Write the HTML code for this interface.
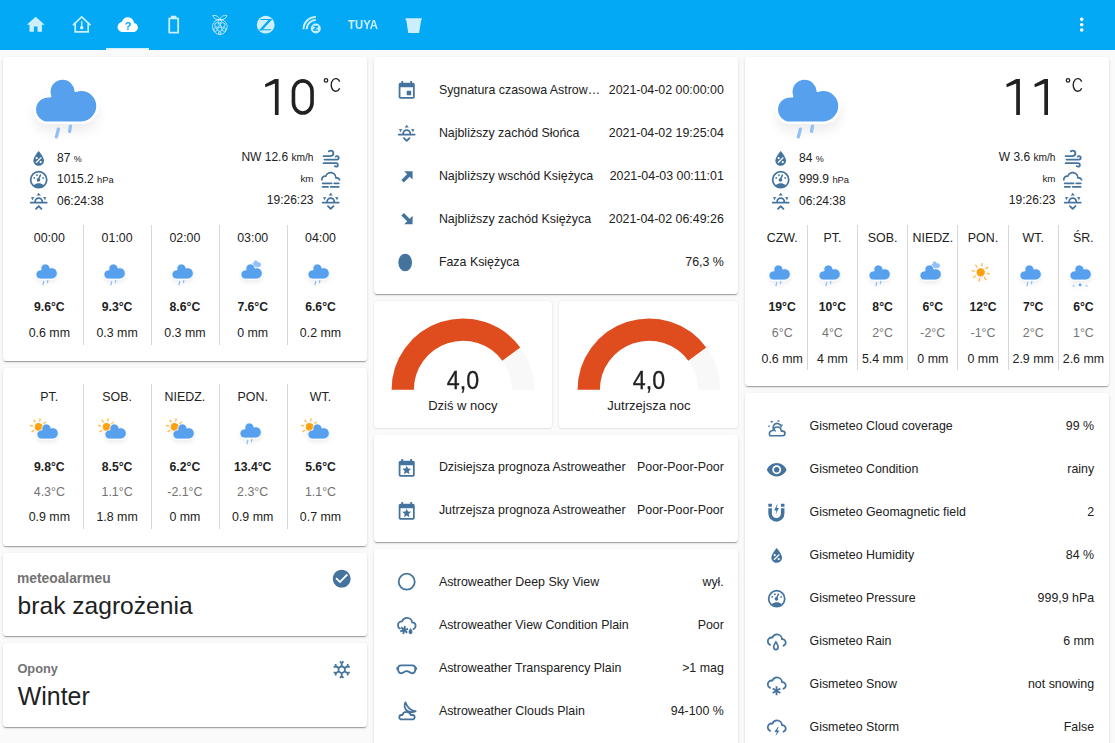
<!DOCTYPE html>
<html><head><meta charset="utf-8">
<style>
*{box-sizing:border-box;margin:0;padding:0}
html,body{width:1115px;height:743px;overflow:hidden;background:#fafafa;font-family:"Liberation Sans",sans-serif;color:#212121}
.hdr{position:absolute;left:0;top:0;width:1115px;height:50px;background:#03a9f4}
.card{position:absolute;background:#fff;border-radius:3.6px;box-shadow:0 2px 1px -1px rgba(0,0,0,.2),0 1px 1px 0 rgba(0,0,0,.14),0 1px 3px 0 rgba(0,0,0,.12)}
.card2{position:absolute;background:#fff;border-radius:3.6px;box-shadow:0 0 2px rgba(0,0,0,.12),0 1px 2px rgba(0,0,0,.06)}
.t{position:absolute;white-space:nowrap;line-height:1}
.ic{position:absolute;overflow:visible}
.vl{position:absolute;width:1px;background:#d6d6d6}
</style></head><body>
<div class="hdr"></div>
<svg class="ic" style="left:24.90px;top:14.14px;width:21.41px;height:21.41px;" viewBox="0 0 24 24"><path fill="rgba(255,255,255,0.8)" d="M10,20V14H14V20H19V12H22L12,3L2,12H5V20H10Z"/></svg>
<svg class="ic" style="left:71.00px;top:14.04px;width:21.41px;height:21.41px;" viewBox="0 0 24 24"><path fill="none" stroke="rgba(255,255,255,0.8)" stroke-width="1.9" d="M2.2,12.4L12,3.2L21.8,12.4M4.7,10.6V20.1H19.3V10.6"/><rect x="11.2" y="8" width="1.6" height="7" fill="rgba(255,255,255,0.8)"/><circle cx="12" cy="15.5" r="2" fill="rgba(255,255,255,0.8)"/></svg>
<svg class="ic" style="left:116.90px;top:13.90px;width:21.41px;height:21.41px;" viewBox="0 0 24 24"><path fill="#fff" d="M6.3,20.2C3.2,20.2 0.6,17.7 0.6,14.6C0.6,11.8 2.7,9.5 5.4,9.1C6.5,5.9 9,3.7 12.1,3.7C15.8,3.7 18.8,6.6 19.2,10.2C21.6,10.4 23.4,12.5 23.4,15C23.4,17.9 21.1,20.2 18.2,20.2Z"/><text x="12.1" y="17.4" font-family="Liberation Sans" font-weight="700" font-size="12.5" fill="#03a9f4" text-anchor="middle">?</text></svg>
<svg class="ic" style="left:162.80px;top:14.30px;width:21.41px;height:21.41px;" viewBox="0 0 24 24"><path fill="rgba(255,255,255,0.8)" d="M16,20H8V6H16M16.67,4H15V2H9V4H7.33A1.33,1.33 0 0,0 6,5.33V20.67C6,21.4 6.6,22 7.33,22H16.67A1.33,1.33 0 0,0 18,20.67V5.33C18,4.6 17.4,4 16.67,4Z"/></svg>
<svg class="ic" style="left:208.90px;top:14.30px;width:21.41px;height:21.41px;" viewBox="0 0 24 24"><g fill="none" stroke="rgba(255,255,255,0.8)" stroke-width="0.95"><path d="M11.7,6.3C9,6.7 5,5.5 4.2,1.8C7.6,1.1 11.2,2.5 11.7,6.3Z"/><path d="M12.5,6.3C15.2,6.7 19.2,5.5 20,1.8C16.6,1.1 13,2.5 12.5,6.3Z"/><path d="M12.1,6.4C15.6,6.4 19,8.2 19.8,11.6C20.6,13.2 20.4,15.4 19.6,17C18.8,20.6 15.6,23 12.1,23C8.6,23 5.4,20.6 4.6,17C3.8,15.4 3.6,13.2 4.4,11.6C5.2,8.2 8.6,6.4 12.1,6.4Z"/><circle cx="12.1" cy="8.4" r="1.9"/><circle cx="9" cy="12.3" r="2.6"/><circle cx="15.3" cy="12.3" r="2.6"/><circle cx="12.1" cy="17" r="2.4"/><circle cx="7.2" cy="17.5" r="1.9"/><circle cx="17" cy="17.5" r="1.9"/><circle cx="12.1" cy="21.2" r="1.4"/></g></svg>
<svg class="ic" style="left:255.30px;top:14.30px;width:21.41px;height:21.41px;" viewBox="0 0 24 24"><circle cx="12" cy="12" r="10" fill="rgba(255,255,255,0.8)"/><path fill="none" stroke="#03a9f4" stroke-width="1.3" d="M6.2,6.2H18.4M5.6,17.7H17.8"/><path fill="#03a9f4" d="M16.1,5.6H19.6L8,18.3H4.5Z"/></svg>
<svg class="ic" style="left:301.00px;top:14.30px;width:21.41px;height:21.41px;" viewBox="0 0 24 24"><g fill="none" stroke="rgba(255,255,255,0.8)" stroke-width="2.2" transform="translate(0,1.1)"><path d="M2.8,16A13.8,13.8 0 0 1 16.6,2.2"/><path d="M6.3,16A10.3,10.3 0 0 1 16.6,5.7"/></g><circle cx="16.6" cy="16.3" r="5.6" fill="rgba(255,255,255,0.8)"/><path fill="#03a9f4" d="M13.9,13.3H19.2V14.6L16.1,17.4H19.2V18.8H13.6V17.5L16.7,14.7H13.9Z"/></svg>
<div class="t" style="top:19.47px;font-size:12.2px;font-weight:700;color:rgba(255,255,255,0.8);left:212.80px;width:300px;text-align:center;transform:scaleX(0.93);transform-origin:center bottom;">TUYA</div>
<svg class="ic" style="left:403.30px;top:14.70px;width:21.41px;height:21.41px;" viewBox="0 0 24 24"><path fill="rgba(255,255,255,0.8)" d="M2.9,3.7H21V5.6L20.3,5.8L18.1,20.3H5.9L3.7,5.8L2.9,5.6Z"/></svg>
<svg class="ic" style="left:1070.50px;top:13.80px;width:21.41px;height:21.41px;" viewBox="0 0 24 24"><path fill="#fff" d="M12,16A2,2 0 0,1 14,18A2,2 0 0,1 12,20A2,2 0 0,1 10,18A2,2 0 0,1 12,16M12,10A2,2 0 0,1 14,12A2,2 0 0,1 12,14A2,2 0 0,1 10,12A2,2 0 0,1 12,10M12,4A2,2 0 0,1 14,6A2,2 0 0,1 12,8A2,2 0 0,1 10,6A2,2 0 0,1 12,4Z"/></svg>
<div style="position:absolute;left:106px;top:48px;width:43px;height:2px;background:linear-gradient(rgba(255,255,255,.75),#fff)"></div>
<svg width="0" height="0" style="position:absolute"><defs><filter id="blur" x="-50%" y="-50%" width="200%" height="200%"><feGaussianBlur in="SourceAlpha" stdDeviation="3"/><feOffset dx="0" dy="4" result="o"/><feComponentTransfer><feFuncA type="linear" slope="0.07"/></feComponentTransfer><feMerge><feMergeNode/><feMergeNode in="SourceGraphic"/></feMerge></filter></defs></svg>
<div class="card" style="left:3px;top:57px;width:364px;height:304px"></div>
<div class="card" style="left:3px;top:368px;width:364px;height:178px"></div>
<div class="card" style="left:3px;top:553px;width:364px;height:83px"></div>
<div class="card" style="left:3px;top:643px;width:364px;height:84px"></div>
<div class="card" style="left:374px;top:57px;width:364px;height:237px"></div>
<div class="card2" style="left:374px;top:301px;width:178px;height:127px"></div>
<div class="card2" style="left:559px;top:301px;width:179px;height:127px"></div>
<div class="card" style="left:374px;top:435px;width:364px;height:107px"></div>
<div class="card" style="left:374px;top:549px;width:364px;height:260px"></div>
<div class="card" style="left:745px;top:57px;width:364px;height:329px"></div>
<div class="card" style="left:745px;top:393px;width:364px;height:400px"></div>
<svg class="ic" style="left:2.83px;top:38.12px;width:126.72px;height:126.72px" viewBox="0 0 64 64"><g filter="url(#blur)"><path d="M47.7,35.4c0-4.6-3.7-8.2-8.2-8.2c-1,0-1.9,0.2-2.8,0.5c-0.3-3.4-3.1-6.2-6.6-6.2c-3.7,0-6.7,3-6.7,6.7c0,0.8,0.2,1.6,0.4,2.3c-0.3-0.1-0.7-0.1-1-0.1c-3.7,0-6.7,3-6.7,6.7c0,3.6,2.9,6.6,6.5,6.7l17.2,0C44.2,43.3,47.7,39.8,47.7,35.4z" fill="#57A0EE" stroke="#fff" stroke-width="1.2" stroke-linejoin="round" transform="translate(0,-1)"/></g></svg>
<svg class="ic" style="left:0px;top:0;width:120px;height:150px" viewBox="0 0 120 150"><line x1="58.4" y1="129.2" x2="56.4" y2="136.9" stroke="#91C0F8" stroke-width="3.3" stroke-linecap="round"/><line x1="70.4" y1="126.2" x2="69.6" y2="131.4" stroke="#91C0F8" stroke-width="3.3" stroke-linecap="round"/></svg>
<svg class="ic" style="left:0;top:0;width:1115px;height:130px" viewBox="0 0 1115 130"><path fill="#212121" d="M274.90,79L278.60,79V114.9H274.90V83.4L265.40,87.2L265.00,84.3Z"/><rect x="293.45" y="80.85" width="18.6" height="32.2" rx="9.3" ry="10.5" fill="none" stroke="#212121" stroke-width="3.6"/><circle cx="326.00" cy="80.4" r="1.75" fill="none" stroke="#212121" stroke-width="1.25"/><path d="M339.70,81.6 A4.6,6.3 0 1 0 339.70,88.2" fill="none" stroke="#212121" stroke-width="1.35"/></svg>
<svg class="ic" style="left:28.00px;top:147.90px;width:21.41px;height:21.41px;" viewBox="0 0 24 24"><path fill="#44739e" d="M12,3.25C12,3.25 6,10 6,14C6,17.32 8.69,20 12,20A6,6 0 0,0 18,14C18,10 12,3.25 12,3.25M14.47,9.97L15.53,11.03L9.53,17.03L8.47,15.97M9.75,10A1.25,1.25 0 0,1 11,11.25A1.25,1.25 0 0,1 9.75,12.5A1.25,1.25 0 0,1 8.5,11.25A1.25,1.25 0 0,1 9.75,10M14.25,14.5A1.25,1.25 0 0,1 15.5,15.75A1.25,1.25 0 0,1 14.25,17A1.25,1.25 0 0,1 13,15.75A1.25,1.25 0 0,1 14.25,14.5Z"/></svg>
<svg class="ic" style="left:28.00px;top:169.00px;width:21.41px;height:21.41px;" viewBox="0 0 24 24"><path fill="#44739e" d="M12,2A10,10 0 0,0 2,12A10,10 0 0,0 12,22A10,10 0 0,0 22,12A10,10 0 0,0 12,2M12,4A8,8 0 0,1 20,12C20,14.4 19,16.5 17.3,18C15.9,16.7 14,16 12,16C10,16 8.2,16.7 6.7,18C5,16.5 4,14.4 4,12A8,8 0 0,1 12,4M14,5.89C13.62,5.9 13.26,6.15 13.1,6.54L11.58,10C10.6,10.18 9.84,11 9.73,12C9.6,13.09 10.38,14.08 11.5,14.22C12.6,14.35 13.6,13.56 13.72,12.46C13.79,11.83 13.57,11.21 13.1,10.78L14.72,7.35C14.93,6.85 14.7,6.28 14.21,6.07C14.15,6.03 14.08,6 14,5.89M10,6A1,1 0 0,0 9,7A1,1 0 0,0 10,8A1,1 0 0,0 11,7A1,1 0 0,0 10,6M7,9A1,1 0 0,0 6,10A1,1 0 0,0 7,11A1,1 0 0,0 8,10A1,1 0 0,0 7,9M17,9A1,1 0 0,0 16,10A1,1 0 0,0 17,11A1,1 0 0,0 18,10A1,1 0 0,0 17,9Z"/></svg>
<svg class="ic" style="left:28.00px;top:191.30px;width:21.41px;height:21.41px;" viewBox="0 0 24 24"><path fill="#44739e" d="M3,12H7A5,5 0 0,1 12,7A5,5 0 0,1 17,12H21A1,1 0 0,1 22,13A1,1 0 0,1 21,14H3A1,1 0 0,1 2,13A1,1 0 0,1 3,12M15,12A3,3 0 0,0 12,9A3,3 0 0,0 9,12H15M12,2L14.39,5.42C13.65,5.15 12.84,5 12,5C11.16,5 10.35,5.15 9.61,5.42L12,2M3.34,7L7.5,6.65C6.9,7.16 6.36,7.78 5.94,8.5C5.5,9.24 5.25,10 5.11,10.79L3.34,7M20.65,7L18.88,10.79C18.74,10 18.47,9.23 18.05,8.5C17.63,7.78 17.1,7.15 16.5,6.64L20.65,7M12.71,16.3L15.82,19.41C16.21,19.8 16.21,20.43 15.82,20.82C15.43,21.21 14.8,21.21 14.41,20.82L12,18.41L9.59,20.82C9.2,21.21 8.57,21.21 8.18,20.82C7.79,20.43 7.79,19.8 8.18,19.41L11.29,16.3C11.5,16.1 11.74,16 12,16C12.26,16 12.5,16.1 12.71,16.3Z"/></svg>
<svg class="ic" style="left:320.05px;top:148.00px;width:21.41px;height:21.41px;" viewBox="0 0 24 24"><path fill="#44739e" d="M4,10A1,1 0 0,1 3,9A1,1 0 0,1 4,8H12A2,2 0 0,0 14,6A2,2 0 0,0 12,4C11.45,4 10.95,4.22 10.59,4.59C10.2,5 9.56,5 9.17,4.59C8.78,4.2 8.78,3.56 9.17,3.17C9.9,2.45 10.9,2 12,2A4,4 0 0,1 16,6A4,4 0 0,1 12,10H4M19,12A1,1 0 0,0 20,11A1,1 0 0,0 19,10C18.72,10 18.47,10.11 18.29,10.29C17.9,10.68 17.27,10.68 16.88,10.29C16.5,9.9 16.5,9.27 16.88,8.88C17.42,8.34 18.17,8 19,8A3,3 0 0,1 22,11A3,3 0 0,1 19,14H5A1,1 0 0,1 4,13A1,1 0 0,1 5,12H19M18,18H4A1,1 0 0,1 3,17A1,1 0 0,1 4,16H18A3,3 0 0,1 21,19A3,3 0 0,1 18,22C17.17,22 16.42,21.66 15.88,21.12C15.5,20.73 15.5,20.1 15.88,19.71C16.27,19.32 16.9,19.32 17.29,19.71C17.47,19.89 17.72,20 18,20A1,1 0 0,0 19,19A1,1 0 0,0 18,18Z"/></svg>
<svg class="ic" style="left:319.90px;top:169.25px;width:21.41px;height:21.41px;" viewBox="0 0 24 24"><path fill="#44739e" d="M3,15H13A1,1 0 0,1 14,16A1,1 0 0,1 13,17H3A1,1 0 0,1 2,16A1,1 0 0,1 3,15M16,15H21A1,1 0 0,1 22,16A1,1 0 0,1 21,17H16A1,1 0 0,1 15,16A1,1 0 0,1 16,15M1,12A5,5 0 0,1 6,7C7,4.65 9.3,3 12,3C15.43,3 18.24,5.66 18.5,9.03L19,9C21.19,9 22.97,10.76 23,13H21A2,2 0 0,0 19,11H17V10A5,5 0 0,0 12,5C9.5,5 7.45,6.82 7.06,9.19C6.73,9.07 6.37,9 6,9A3,3 0 0,0 3,12C3,12.35 3.06,12.69 3.17,13H1.1L1,12M3,19H9A1,1 0 0,1 10,20A1,1 0 0,1 9,21H3A1,1 0 0,1 2,20A1,1 0 0,1 3,19M12,19H21A1,1 0 0,1 22,20A1,1 0 0,1 21,21H12A1,1 0 0,1 11,20A1,1 0 0,1 12,19Z"/></svg>
<svg class="ic" style="left:320.20px;top:191.20px;width:21.41px;height:21.41px;" viewBox="0 0 24 24"><path fill="#44739e" d="M3,12H7A5,5 0 0,1 12,7A5,5 0 0,1 17,12H21A1,1 0 0,1 22,13A1,1 0 0,1 21,14H3A1,1 0 0,1 2,13A1,1 0 0,1 3,12M15,12A3,3 0 0,0 12,9A3,3 0 0,0 9,12H15M12,2L14.39,5.42C13.65,5.15 12.84,5 12,5C11.16,5 10.35,5.15 9.61,5.42L12,2M3.34,7L7.5,6.65C6.9,7.16 6.36,7.78 5.94,8.5C5.5,9.24 5.25,10 5.11,10.79L3.34,7M20.65,7L18.88,10.79C18.74,10 18.47,9.23 18.05,8.5C17.63,7.78 17.1,7.15 16.5,6.64L20.65,7M12.71,20.71L15.82,17.6C16.21,17.21 16.21,16.57 15.82,16.18C15.43,15.79 14.8,15.79 14.41,16.18L12,18.59L9.59,16.18C9.2,15.79 8.57,15.79 8.18,16.18C7.79,16.57 7.79,17.21 8.18,17.6L11.29,20.71C11.5,20.9 11.74,21 12,21C12.26,21 12.5,20.9 12.71,20.71Z"/></svg>
<div class="t" style="top:152.14px;font-size:12.0px;left:57.00px;">87 <span style="font-size:9px">%</span></div>
<div class="t" style="top:173.34px;font-size:12.0px;left:57.00px;">1015.2 <span style="font-size:9.4px">hPa</span></div>
<div class="t" style="top:194.84px;font-size:12.0px;left:57.00px;">06:24:38</div>
<div class="t" style="top:150.94px;font-size:12.0px;right:801.50px;">NW 12.6 <span style="font-size:10.2px">km/h</span></div>
<div class="t" style="top:174.10px;font-size:9.8px;right:801.50px;">km</div>
<div class="t" style="top:194.14px;font-size:12.0px;right:801.50px;">19:26:23</div>
<svg class="ic" style="left:744.83px;top:38.12px;width:126.72px;height:126.72px" viewBox="0 0 64 64"><g filter="url(#blur)"><path d="M47.7,35.4c0-4.6-3.7-8.2-8.2-8.2c-1,0-1.9,0.2-2.8,0.5c-0.3-3.4-3.1-6.2-6.6-6.2c-3.7,0-6.7,3-6.7,6.7c0,0.8,0.2,1.6,0.4,2.3c-0.3-0.1-0.7-0.1-1-0.1c-3.7,0-6.7,3-6.7,6.7c0,3.6,2.9,6.6,6.5,6.7l17.2,0C44.2,43.3,47.7,39.8,47.7,35.4z" fill="#57A0EE" stroke="#fff" stroke-width="1.2" stroke-linejoin="round" transform="translate(0,-1)"/></g></svg>
<svg class="ic" style="left:742px;top:0;width:120px;height:150px" viewBox="0 0 120 150"><line x1="58.4" y1="129.2" x2="56.4" y2="136.9" stroke="#91C0F8" stroke-width="3.3" stroke-linecap="round"/><line x1="70.4" y1="126.2" x2="69.6" y2="131.4" stroke="#91C0F8" stroke-width="3.3" stroke-linecap="round"/></svg>
<svg class="ic" style="left:0;top:0;width:1115px;height:130px" viewBox="0 0 1115 130"><path fill="#212121" d="M1016.20,79L1019.90,79V114.9H1016.20V83.4L1006.70,87.2L1006.30,84.3Z"/><path fill="#212121" d="M1044.30,79L1048.00,79V114.9H1044.30V83.4L1034.80,87.2L1034.40,84.3Z"/><circle cx="1068.00" cy="80.4" r="1.75" fill="none" stroke="#212121" stroke-width="1.25"/><path d="M1081.70,81.6 A4.6,6.3 0 1 0 1081.70,88.2" fill="none" stroke="#212121" stroke-width="1.35"/></svg>
<svg class="ic" style="left:770.00px;top:147.90px;width:21.41px;height:21.41px;" viewBox="0 0 24 24"><path fill="#44739e" d="M12,3.25C12,3.25 6,10 6,14C6,17.32 8.69,20 12,20A6,6 0 0,0 18,14C18,10 12,3.25 12,3.25M14.47,9.97L15.53,11.03L9.53,17.03L8.47,15.97M9.75,10A1.25,1.25 0 0,1 11,11.25A1.25,1.25 0 0,1 9.75,12.5A1.25,1.25 0 0,1 8.5,11.25A1.25,1.25 0 0,1 9.75,10M14.25,14.5A1.25,1.25 0 0,1 15.5,15.75A1.25,1.25 0 0,1 14.25,17A1.25,1.25 0 0,1 13,15.75A1.25,1.25 0 0,1 14.25,14.5Z"/></svg>
<svg class="ic" style="left:770.00px;top:169.00px;width:21.41px;height:21.41px;" viewBox="0 0 24 24"><path fill="#44739e" d="M12,2A10,10 0 0,0 2,12A10,10 0 0,0 12,22A10,10 0 0,0 22,12A10,10 0 0,0 12,2M12,4A8,8 0 0,1 20,12C20,14.4 19,16.5 17.3,18C15.9,16.7 14,16 12,16C10,16 8.2,16.7 6.7,18C5,16.5 4,14.4 4,12A8,8 0 0,1 12,4M14,5.89C13.62,5.9 13.26,6.15 13.1,6.54L11.58,10C10.6,10.18 9.84,11 9.73,12C9.6,13.09 10.38,14.08 11.5,14.22C12.6,14.35 13.6,13.56 13.72,12.46C13.79,11.83 13.57,11.21 13.1,10.78L14.72,7.35C14.93,6.85 14.7,6.28 14.21,6.07C14.15,6.03 14.08,6 14,5.89M10,6A1,1 0 0,0 9,7A1,1 0 0,0 10,8A1,1 0 0,0 11,7A1,1 0 0,0 10,6M7,9A1,1 0 0,0 6,10A1,1 0 0,0 7,11A1,1 0 0,0 8,10A1,1 0 0,0 7,9M17,9A1,1 0 0,0 16,10A1,1 0 0,0 17,11A1,1 0 0,0 18,10A1,1 0 0,0 17,9Z"/></svg>
<svg class="ic" style="left:770.00px;top:191.30px;width:21.41px;height:21.41px;" viewBox="0 0 24 24"><path fill="#44739e" d="M3,12H7A5,5 0 0,1 12,7A5,5 0 0,1 17,12H21A1,1 0 0,1 22,13A1,1 0 0,1 21,14H3A1,1 0 0,1 2,13A1,1 0 0,1 3,12M15,12A3,3 0 0,0 12,9A3,3 0 0,0 9,12H15M12,2L14.39,5.42C13.65,5.15 12.84,5 12,5C11.16,5 10.35,5.15 9.61,5.42L12,2M3.34,7L7.5,6.65C6.9,7.16 6.36,7.78 5.94,8.5C5.5,9.24 5.25,10 5.11,10.79L3.34,7M20.65,7L18.88,10.79C18.74,10 18.47,9.23 18.05,8.5C17.63,7.78 17.1,7.15 16.5,6.64L20.65,7M12.71,16.3L15.82,19.41C16.21,19.8 16.21,20.43 15.82,20.82C15.43,21.21 14.8,21.21 14.41,20.82L12,18.41L9.59,20.82C9.2,21.21 8.57,21.21 8.18,20.82C7.79,20.43 7.79,19.8 8.18,19.41L11.29,16.3C11.5,16.1 11.74,16 12,16C12.26,16 12.5,16.1 12.71,16.3Z"/></svg>
<svg class="ic" style="left:1062.05px;top:148.00px;width:21.41px;height:21.41px;" viewBox="0 0 24 24"><path fill="#44739e" d="M4,10A1,1 0 0,1 3,9A1,1 0 0,1 4,8H12A2,2 0 0,0 14,6A2,2 0 0,0 12,4C11.45,4 10.95,4.22 10.59,4.59C10.2,5 9.56,5 9.17,4.59C8.78,4.2 8.78,3.56 9.17,3.17C9.9,2.45 10.9,2 12,2A4,4 0 0,1 16,6A4,4 0 0,1 12,10H4M19,12A1,1 0 0,0 20,11A1,1 0 0,0 19,10C18.72,10 18.47,10.11 18.29,10.29C17.9,10.68 17.27,10.68 16.88,10.29C16.5,9.9 16.5,9.27 16.88,8.88C17.42,8.34 18.17,8 19,8A3,3 0 0,1 22,11A3,3 0 0,1 19,14H5A1,1 0 0,1 4,13A1,1 0 0,1 5,12H19M18,18H4A1,1 0 0,1 3,17A1,1 0 0,1 4,16H18A3,3 0 0,1 21,19A3,3 0 0,1 18,22C17.17,22 16.42,21.66 15.88,21.12C15.5,20.73 15.5,20.1 15.88,19.71C16.27,19.32 16.9,19.32 17.29,19.71C17.47,19.89 17.72,20 18,20A1,1 0 0,0 19,19A1,1 0 0,0 18,18Z"/></svg>
<svg class="ic" style="left:1061.90px;top:169.25px;width:21.41px;height:21.41px;" viewBox="0 0 24 24"><path fill="#44739e" d="M3,15H13A1,1 0 0,1 14,16A1,1 0 0,1 13,17H3A1,1 0 0,1 2,16A1,1 0 0,1 3,15M16,15H21A1,1 0 0,1 22,16A1,1 0 0,1 21,17H16A1,1 0 0,1 15,16A1,1 0 0,1 16,15M1,12A5,5 0 0,1 6,7C7,4.65 9.3,3 12,3C15.43,3 18.24,5.66 18.5,9.03L19,9C21.19,9 22.97,10.76 23,13H21A2,2 0 0,0 19,11H17V10A5,5 0 0,0 12,5C9.5,5 7.45,6.82 7.06,9.19C6.73,9.07 6.37,9 6,9A3,3 0 0,0 3,12C3,12.35 3.06,12.69 3.17,13H1.1L1,12M3,19H9A1,1 0 0,1 10,20A1,1 0 0,1 9,21H3A1,1 0 0,1 2,20A1,1 0 0,1 3,19M12,19H21A1,1 0 0,1 22,20A1,1 0 0,1 21,21H12A1,1 0 0,1 11,20A1,1 0 0,1 12,19Z"/></svg>
<svg class="ic" style="left:1062.20px;top:191.20px;width:21.41px;height:21.41px;" viewBox="0 0 24 24"><path fill="#44739e" d="M3,12H7A5,5 0 0,1 12,7A5,5 0 0,1 17,12H21A1,1 0 0,1 22,13A1,1 0 0,1 21,14H3A1,1 0 0,1 2,13A1,1 0 0,1 3,12M15,12A3,3 0 0,0 12,9A3,3 0 0,0 9,12H15M12,2L14.39,5.42C13.65,5.15 12.84,5 12,5C11.16,5 10.35,5.15 9.61,5.42L12,2M3.34,7L7.5,6.65C6.9,7.16 6.36,7.78 5.94,8.5C5.5,9.24 5.25,10 5.11,10.79L3.34,7M20.65,7L18.88,10.79C18.74,10 18.47,9.23 18.05,8.5C17.63,7.78 17.1,7.15 16.5,6.64L20.65,7M12.71,20.71L15.82,17.6C16.21,17.21 16.21,16.57 15.82,16.18C15.43,15.79 14.8,15.79 14.41,16.18L12,18.59L9.59,16.18C9.2,15.79 8.57,15.79 8.18,16.18C7.79,16.57 7.79,17.21 8.18,17.6L11.29,20.71C11.5,20.9 11.74,21 12,21C12.26,21 12.5,20.9 12.71,20.71Z"/></svg>
<div class="t" style="top:152.14px;font-size:12.0px;left:799.00px;">84 <span style="font-size:9px">%</span></div>
<div class="t" style="top:173.34px;font-size:12.0px;left:799.00px;">999.9 <span style="font-size:9.4px">hPa</span></div>
<div class="t" style="top:194.84px;font-size:12.0px;left:799.00px;">06:24:38</div>
<div class="t" style="top:150.94px;font-size:12.0px;right:59.50px;">W 3.6 <span style="font-size:10.2px">km/h</span></div>
<div class="t" style="top:174.10px;font-size:9.8px;right:59.50px;">km</div>
<div class="t" style="top:194.14px;font-size:12.0px;right:59.50px;">19:26:23</div>
<div class="t" style="top:232.20px;font-size:12.4px;left:-100.70px;width:300px;text-align:center;">00:00</div>
<svg class="ic" style="left:25.48px;top:250.09px;width:43.39px;height:43.39px" viewBox="0 0 64 64"><g filter="url(#blur)"><path d="M47.7,35.4c0-4.6-3.7-8.2-8.2-8.2c-1,0-1.9,0.2-2.8,0.5c-0.3-3.4-3.1-6.2-6.6-6.2c-3.7,0-6.7,3-6.7,6.7c0,0.8,0.2,1.6,0.4,2.3c-0.3-0.1-0.7-0.1-1-0.1c-3.7,0-6.7,3-6.7,6.7c0,3.6,2.9,6.6,6.5,6.7l17.2,0C44.2,43.3,47.7,39.8,47.7,35.4z" fill="#57A0EE" stroke="#fff" stroke-width="1.2" stroke-linejoin="round" transform="translate(0,-1)"/><line x1="27.6" y1="46.5" x2="26.6" y2="51" stroke="#91C0F8" stroke-width="2" stroke-linecap="round"/><line x1="33.6" y1="45" x2="33.1" y2="48" stroke="#91C0F8" stroke-width="2" stroke-linecap="round"/></g></svg>
<div class="t" style="top:300.67px;font-size:12.2px;font-weight:700;left:-100.70px;width:300px;text-align:center;">9.6°C</div>
<div class="t" style="top:327.40px;font-size:12.4px;left:-100.70px;width:300px;text-align:center;">0.6 mm</div>
<div class="vl" style="left:83.1px;top:225px;height:120px"></div>
<div class="t" style="top:232.20px;font-size:12.4px;left:-32.90px;width:300px;text-align:center;">01:00</div>
<svg class="ic" style="left:93.28px;top:250.09px;width:43.39px;height:43.39px" viewBox="0 0 64 64"><g filter="url(#blur)"><path d="M47.7,35.4c0-4.6-3.7-8.2-8.2-8.2c-1,0-1.9,0.2-2.8,0.5c-0.3-3.4-3.1-6.2-6.6-6.2c-3.7,0-6.7,3-6.7,6.7c0,0.8,0.2,1.6,0.4,2.3c-0.3-0.1-0.7-0.1-1-0.1c-3.7,0-6.7,3-6.7,6.7c0,3.6,2.9,6.6,6.5,6.7l17.2,0C44.2,43.3,47.7,39.8,47.7,35.4z" fill="#57A0EE" stroke="#fff" stroke-width="1.2" stroke-linejoin="round" transform="translate(0,-1)"/><line x1="27.6" y1="46.5" x2="26.6" y2="51" stroke="#91C0F8" stroke-width="2" stroke-linecap="round"/><line x1="33.6" y1="45" x2="33.1" y2="48" stroke="#91C0F8" stroke-width="2" stroke-linecap="round"/></g></svg>
<div class="t" style="top:300.67px;font-size:12.2px;font-weight:700;left:-32.90px;width:300px;text-align:center;">9.3°C</div>
<div class="t" style="top:327.40px;font-size:12.4px;left:-32.90px;width:300px;text-align:center;">0.3 mm</div>
<div class="vl" style="left:150.9px;top:225px;height:120px"></div>
<div class="t" style="top:232.20px;font-size:12.4px;left:34.90px;width:300px;text-align:center;">02:00</div>
<svg class="ic" style="left:161.08px;top:250.09px;width:43.39px;height:43.39px" viewBox="0 0 64 64"><g filter="url(#blur)"><path d="M47.7,35.4c0-4.6-3.7-8.2-8.2-8.2c-1,0-1.9,0.2-2.8,0.5c-0.3-3.4-3.1-6.2-6.6-6.2c-3.7,0-6.7,3-6.7,6.7c0,0.8,0.2,1.6,0.4,2.3c-0.3-0.1-0.7-0.1-1-0.1c-3.7,0-6.7,3-6.7,6.7c0,3.6,2.9,6.6,6.5,6.7l17.2,0C44.2,43.3,47.7,39.8,47.7,35.4z" fill="#57A0EE" stroke="#fff" stroke-width="1.2" stroke-linejoin="round" transform="translate(0,-1)"/><line x1="27.6" y1="46.5" x2="26.6" y2="51" stroke="#91C0F8" stroke-width="2" stroke-linecap="round"/><line x1="33.6" y1="45" x2="33.1" y2="48" stroke="#91C0F8" stroke-width="2" stroke-linecap="round"/></g></svg>
<div class="t" style="top:300.67px;font-size:12.2px;font-weight:700;left:34.90px;width:300px;text-align:center;">8.6°C</div>
<div class="t" style="top:327.40px;font-size:12.4px;left:34.90px;width:300px;text-align:center;">0.3 mm</div>
<div class="vl" style="left:218.7px;top:225px;height:120px"></div>
<div class="t" style="top:232.20px;font-size:12.4px;left:102.70px;width:300px;text-align:center;">03:00</div>
<svg class="ic" style="left:229.58px;top:250.09px;width:43.39px;height:43.39px" viewBox="0 0 64 64"><g filter="url(#blur)"><path d="M47.7,35.4c0-4.6-3.7-8.2-8.2-8.2c-1,0-1.9,0.2-2.8,0.5c-0.3-3.4-3.1-6.2-6.6-6.2c-3.7,0-6.7,3-6.7,6.7c0,0.8,0.2,1.6,0.4,2.3c-0.3-0.1-0.7-0.1-1-0.1c-3.7,0-6.7,3-6.7,6.7c0,3.6,2.9,6.6,6.5,6.7l17.2,0C44.2,43.3,47.7,39.8,47.7,35.4z" fill="#91C0F8" stroke="#fff" stroke-width="1.2" stroke-linejoin="round" transform="translate(24,5.3) scale(0.46)"/><path d="M47.7,35.4c0-4.6-3.7-8.2-8.2-8.2c-1,0-1.9,0.2-2.8,0.5c-0.3-3.4-3.1-6.2-6.6-6.2c-3.7,0-6.7,3-6.7,6.7c0,0.8,0.2,1.6,0.4,2.3c-0.3-0.1-0.7-0.1-1-0.1c-3.7,0-6.7,3-6.7,6.7c0,3.6,2.9,6.6,6.5,6.7l17.2,0C44.2,43.3,47.7,39.8,47.7,35.4z" fill="#57A0EE" stroke="#fff" stroke-width="1.2" stroke-linejoin="round" transform="translate(0,-1)"/></g></svg>
<div class="t" style="top:300.67px;font-size:12.2px;font-weight:700;left:102.70px;width:300px;text-align:center;">7.6°C</div>
<div class="t" style="top:327.40px;font-size:12.4px;left:102.70px;width:300px;text-align:center;">0 mm</div>
<div class="vl" style="left:286.5px;top:225px;height:120px"></div>
<div class="t" style="top:232.20px;font-size:12.4px;left:170.50px;width:300px;text-align:center;">04:00</div>
<svg class="ic" style="left:296.68px;top:250.09px;width:43.39px;height:43.39px" viewBox="0 0 64 64"><g filter="url(#blur)"><path d="M47.7,35.4c0-4.6-3.7-8.2-8.2-8.2c-1,0-1.9,0.2-2.8,0.5c-0.3-3.4-3.1-6.2-6.6-6.2c-3.7,0-6.7,3-6.7,6.7c0,0.8,0.2,1.6,0.4,2.3c-0.3-0.1-0.7-0.1-1-0.1c-3.7,0-6.7,3-6.7,6.7c0,3.6,2.9,6.6,6.5,6.7l17.2,0C44.2,43.3,47.7,39.8,47.7,35.4z" fill="#57A0EE" stroke="#fff" stroke-width="1.2" stroke-linejoin="round" transform="translate(0,-1)"/><line x1="27.6" y1="46.5" x2="26.6" y2="51" stroke="#91C0F8" stroke-width="2" stroke-linecap="round"/><line x1="33.6" y1="45" x2="33.1" y2="48" stroke="#91C0F8" stroke-width="2" stroke-linecap="round"/></g></svg>
<div class="t" style="top:300.67px;font-size:12.2px;font-weight:700;left:170.50px;width:300px;text-align:center;">6.6°C</div>
<div class="t" style="top:327.40px;font-size:12.4px;left:170.50px;width:300px;text-align:center;">0.2 mm</div>
<div class="t" style="top:391.40px;font-size:12.4px;left:-100.70px;width:300px;text-align:center;">PT.</div>
<svg class="ic" style="left:26.08px;top:409.69px;width:43.39px;height:43.39px" viewBox="0 0 64 64"><g filter="url(#blur)"><g transform="translate(18.7,25) rotate(10)"><line x1="0" y1="9" x2="0" y2="12" transform="rotate(0)" stroke="#FFB84A" stroke-width="2" stroke-linecap="round"/><line x1="0" y1="9" x2="0" y2="12" transform="rotate(45)" stroke="#FFB84A" stroke-width="2" stroke-linecap="round"/><line x1="0" y1="9" x2="0" y2="12" transform="rotate(90)" stroke="#FFB84A" stroke-width="2" stroke-linecap="round"/><line x1="0" y1="9" x2="0" y2="12" transform="rotate(135)" stroke="#FFB84A" stroke-width="2" stroke-linecap="round"/><line x1="0" y1="9" x2="0" y2="12" transform="rotate(180)" stroke="#FFB84A" stroke-width="2" stroke-linecap="round"/><line x1="0" y1="9" x2="0" y2="12" transform="rotate(225)" stroke="#FFB84A" stroke-width="2" stroke-linecap="round"/><line x1="0" y1="9" x2="0" y2="12" transform="rotate(270)" stroke="#FFB84A" stroke-width="2" stroke-linecap="round"/><line x1="0" y1="9" x2="0" y2="12" transform="rotate(315)" stroke="#FFB84A" stroke-width="2" stroke-linecap="round"/><circle r="5" fill="#FFA00A" stroke="#FFA00A" stroke-width="1.4"/></g><path d="M47.7,35.4c0-4.6-3.7-8.2-8.2-8.2c-1,0-1.9,0.2-2.8,0.5c-0.3-3.4-3.1-6.2-6.6-6.2c-3.7,0-6.7,3-6.7,6.7c0,0.8,0.2,1.6,0.4,2.3c-0.3-0.1-0.7-0.1-1-0.1c-3.7,0-6.7,3-6.7,6.7c0,3.6,2.9,6.6,6.5,6.7l17.2,0C44.2,43.3,47.7,39.8,47.7,35.4z" fill="#57A0EE" stroke="#fff" stroke-width="1.2" stroke-linejoin="round" transform="translate(0,-1)"/></g></svg>
<div class="t" style="top:460.57px;font-size:12.2px;font-weight:700;left:-100.70px;width:300px;text-align:center;">9.8°C</div>
<div class="t" style="top:486.30px;font-size:12.4px;color:#737373;left:-100.70px;width:300px;text-align:center;">4.3°C</div>
<div class="t" style="top:510.50px;font-size:12.4px;left:-100.70px;width:300px;text-align:center;">0.9 mm</div>
<div class="vl" style="left:83.1px;top:384px;height:145px"></div>
<div class="t" style="top:391.40px;font-size:12.4px;left:-32.90px;width:300px;text-align:center;">SOB.</div>
<svg class="ic" style="left:93.88px;top:409.69px;width:43.39px;height:43.39px" viewBox="0 0 64 64"><g filter="url(#blur)"><g transform="translate(18.7,25) rotate(10)"><line x1="0" y1="9" x2="0" y2="12" transform="rotate(0)" stroke="#FFB84A" stroke-width="2" stroke-linecap="round"/><line x1="0" y1="9" x2="0" y2="12" transform="rotate(45)" stroke="#FFB84A" stroke-width="2" stroke-linecap="round"/><line x1="0" y1="9" x2="0" y2="12" transform="rotate(90)" stroke="#FFB84A" stroke-width="2" stroke-linecap="round"/><line x1="0" y1="9" x2="0" y2="12" transform="rotate(135)" stroke="#FFB84A" stroke-width="2" stroke-linecap="round"/><line x1="0" y1="9" x2="0" y2="12" transform="rotate(180)" stroke="#FFB84A" stroke-width="2" stroke-linecap="round"/><line x1="0" y1="9" x2="0" y2="12" transform="rotate(225)" stroke="#FFB84A" stroke-width="2" stroke-linecap="round"/><line x1="0" y1="9" x2="0" y2="12" transform="rotate(270)" stroke="#FFB84A" stroke-width="2" stroke-linecap="round"/><line x1="0" y1="9" x2="0" y2="12" transform="rotate(315)" stroke="#FFB84A" stroke-width="2" stroke-linecap="round"/><circle r="5" fill="#FFA00A" stroke="#FFA00A" stroke-width="1.4"/></g><path d="M47.7,35.4c0-4.6-3.7-8.2-8.2-8.2c-1,0-1.9,0.2-2.8,0.5c-0.3-3.4-3.1-6.2-6.6-6.2c-3.7,0-6.7,3-6.7,6.7c0,0.8,0.2,1.6,0.4,2.3c-0.3-0.1-0.7-0.1-1-0.1c-3.7,0-6.7,3-6.7,6.7c0,3.6,2.9,6.6,6.5,6.7l17.2,0C44.2,43.3,47.7,39.8,47.7,35.4z" fill="#57A0EE" stroke="#fff" stroke-width="1.2" stroke-linejoin="round" transform="translate(0,-1)"/></g></svg>
<div class="t" style="top:460.57px;font-size:12.2px;font-weight:700;left:-32.90px;width:300px;text-align:center;">8.5°C</div>
<div class="t" style="top:486.30px;font-size:12.4px;color:#737373;left:-32.90px;width:300px;text-align:center;">1.1°C</div>
<div class="t" style="top:510.50px;font-size:12.4px;left:-32.90px;width:300px;text-align:center;">1.8 mm</div>
<div class="vl" style="left:150.9px;top:384px;height:145px"></div>
<div class="t" style="top:391.40px;font-size:12.4px;left:34.90px;width:300px;text-align:center;">NIEDZ.</div>
<svg class="ic" style="left:161.68px;top:409.69px;width:43.39px;height:43.39px" viewBox="0 0 64 64"><g filter="url(#blur)"><g transform="translate(18.7,25) rotate(10)"><line x1="0" y1="9" x2="0" y2="12" transform="rotate(0)" stroke="#FFB84A" stroke-width="2" stroke-linecap="round"/><line x1="0" y1="9" x2="0" y2="12" transform="rotate(45)" stroke="#FFB84A" stroke-width="2" stroke-linecap="round"/><line x1="0" y1="9" x2="0" y2="12" transform="rotate(90)" stroke="#FFB84A" stroke-width="2" stroke-linecap="round"/><line x1="0" y1="9" x2="0" y2="12" transform="rotate(135)" stroke="#FFB84A" stroke-width="2" stroke-linecap="round"/><line x1="0" y1="9" x2="0" y2="12" transform="rotate(180)" stroke="#FFB84A" stroke-width="2" stroke-linecap="round"/><line x1="0" y1="9" x2="0" y2="12" transform="rotate(225)" stroke="#FFB84A" stroke-width="2" stroke-linecap="round"/><line x1="0" y1="9" x2="0" y2="12" transform="rotate(270)" stroke="#FFB84A" stroke-width="2" stroke-linecap="round"/><line x1="0" y1="9" x2="0" y2="12" transform="rotate(315)" stroke="#FFB84A" stroke-width="2" stroke-linecap="round"/><circle r="5" fill="#FFA00A" stroke="#FFA00A" stroke-width="1.4"/></g><path d="M47.7,35.4c0-4.6-3.7-8.2-8.2-8.2c-1,0-1.9,0.2-2.8,0.5c-0.3-3.4-3.1-6.2-6.6-6.2c-3.7,0-6.7,3-6.7,6.7c0,0.8,0.2,1.6,0.4,2.3c-0.3-0.1-0.7-0.1-1-0.1c-3.7,0-6.7,3-6.7,6.7c0,3.6,2.9,6.6,6.5,6.7l17.2,0C44.2,43.3,47.7,39.8,47.7,35.4z" fill="#57A0EE" stroke="#fff" stroke-width="1.2" stroke-linejoin="round" transform="translate(0,-1)"/></g></svg>
<div class="t" style="top:460.57px;font-size:12.2px;font-weight:700;left:34.90px;width:300px;text-align:center;">6.2°C</div>
<div class="t" style="top:486.30px;font-size:12.4px;color:#737373;left:34.90px;width:300px;text-align:center;">-2.1°C</div>
<div class="t" style="top:510.50px;font-size:12.4px;left:34.90px;width:300px;text-align:center;">0 mm</div>
<div class="vl" style="left:218.7px;top:384px;height:145px"></div>
<div class="t" style="top:391.40px;font-size:12.4px;left:102.70px;width:300px;text-align:center;">PON.</div>
<svg class="ic" style="left:228.88px;top:409.19px;width:43.39px;height:43.39px" viewBox="0 0 64 64"><g filter="url(#blur)"><path d="M47.7,35.4c0-4.6-3.7-8.2-8.2-8.2c-1,0-1.9,0.2-2.8,0.5c-0.3-3.4-3.1-6.2-6.6-6.2c-3.7,0-6.7,3-6.7,6.7c0,0.8,0.2,1.6,0.4,2.3c-0.3-0.1-0.7-0.1-1-0.1c-3.7,0-6.7,3-6.7,6.7c0,3.6,2.9,6.6,6.5,6.7l17.2,0C44.2,43.3,47.7,39.8,47.7,35.4z" fill="#57A0EE" stroke="#fff" stroke-width="1.2" stroke-linejoin="round" transform="translate(0,-1)"/><line x1="27.6" y1="46.5" x2="26.6" y2="51" stroke="#91C0F8" stroke-width="2" stroke-linecap="round"/><line x1="33.6" y1="45" x2="33.1" y2="48" stroke="#91C0F8" stroke-width="2" stroke-linecap="round"/></g></svg>
<div class="t" style="top:460.57px;font-size:12.2px;font-weight:700;left:102.70px;width:300px;text-align:center;">13.4°C</div>
<div class="t" style="top:486.30px;font-size:12.4px;color:#737373;left:102.70px;width:300px;text-align:center;">2.3°C</div>
<div class="t" style="top:510.50px;font-size:12.4px;left:102.70px;width:300px;text-align:center;">0.9 mm</div>
<div class="vl" style="left:286.5px;top:384px;height:145px"></div>
<div class="t" style="top:391.40px;font-size:12.4px;left:170.50px;width:300px;text-align:center;">WT.</div>
<svg class="ic" style="left:297.28px;top:409.69px;width:43.39px;height:43.39px" viewBox="0 0 64 64"><g filter="url(#blur)"><g transform="translate(18.7,25) rotate(10)"><line x1="0" y1="9" x2="0" y2="12" transform="rotate(0)" stroke="#FFB84A" stroke-width="2" stroke-linecap="round"/><line x1="0" y1="9" x2="0" y2="12" transform="rotate(45)" stroke="#FFB84A" stroke-width="2" stroke-linecap="round"/><line x1="0" y1="9" x2="0" y2="12" transform="rotate(90)" stroke="#FFB84A" stroke-width="2" stroke-linecap="round"/><line x1="0" y1="9" x2="0" y2="12" transform="rotate(135)" stroke="#FFB84A" stroke-width="2" stroke-linecap="round"/><line x1="0" y1="9" x2="0" y2="12" transform="rotate(180)" stroke="#FFB84A" stroke-width="2" stroke-linecap="round"/><line x1="0" y1="9" x2="0" y2="12" transform="rotate(225)" stroke="#FFB84A" stroke-width="2" stroke-linecap="round"/><line x1="0" y1="9" x2="0" y2="12" transform="rotate(270)" stroke="#FFB84A" stroke-width="2" stroke-linecap="round"/><line x1="0" y1="9" x2="0" y2="12" transform="rotate(315)" stroke="#FFB84A" stroke-width="2" stroke-linecap="round"/><circle r="5" fill="#FFA00A" stroke="#FFA00A" stroke-width="1.4"/></g><path d="M47.7,35.4c0-4.6-3.7-8.2-8.2-8.2c-1,0-1.9,0.2-2.8,0.5c-0.3-3.4-3.1-6.2-6.6-6.2c-3.7,0-6.7,3-6.7,6.7c0,0.8,0.2,1.6,0.4,2.3c-0.3-0.1-0.7-0.1-1-0.1c-3.7,0-6.7,3-6.7,6.7c0,3.6,2.9,6.6,6.5,6.7l17.2,0C44.2,43.3,47.7,39.8,47.7,35.4z" fill="#57A0EE" stroke="#fff" stroke-width="1.2" stroke-linejoin="round" transform="translate(0,-1)"/></g></svg>
<div class="t" style="top:460.57px;font-size:12.2px;font-weight:700;left:170.50px;width:300px;text-align:center;">5.6°C</div>
<div class="t" style="top:486.30px;font-size:12.4px;color:#737373;left:170.50px;width:300px;text-align:center;">1.1°C</div>
<div class="t" style="top:510.50px;font-size:12.4px;left:170.50px;width:300px;text-align:center;">0.7 mm</div>
<div class="t" style="top:571.52px;font-size:13.8px;font-weight:700;color:#737373;left:17.00px;">meteoalarmeu</div>
<div class="t" style="top:593.98px;font-size:24.6px;left:17.60px;">brak zagrożenia</div>
<svg class="ic" style="left:331.30px;top:568.30px;width:21.41px;height:21.41px;" viewBox="0 0 24 24"><path fill="#44739e" d="M12 2C6.5 2 2 6.5 2 12S6.5 22 12 22 22 17.5 22 12 17.5 2 12 2M10 17L5 12L6.41 10.59L10 14.17L17.59 6.58L19 8L10 17Z"/></svg>
<div class="t" style="top:662.76px;font-size:12.8px;font-weight:700;color:#737373;left:17.40px;">Opony</div>
<div class="t" style="top:683.92px;font-size:24.9px;left:17.80px;">Winter</div>
<svg class="ic" style="left:330.90px;top:659.00px;width:21.41px;height:21.41px;" viewBox="0 0 24 24"><path fill="#44739e" d="M20.79,13.95L18.46,14.57L16.46,13.44V10.56L18.46,9.43L20.79,10.05L21.31,8.12L19.54,7.65L20,5.88L18.07,5.36L17.45,7.69L15.45,8.82L13,7.38V5.12L14.71,3.41L13.29,2L12,3.29L10.71,2L9.29,3.41L11,5.12V7.38L8.5,8.82L6.5,7.69L5.92,5.36L4,5.88L4.47,7.65L2.7,8.12L3.22,10.05L5.55,9.43L7.55,10.56V13.45L5.55,14.58L3.22,13.96L2.7,15.89L4.47,16.36L4,18.12L5.93,18.64L6.55,16.31L8.55,15.18L11,16.62V18.88L9.29,20.59L10.71,22L12,20.71L13.29,22L14.7,20.59L13,18.88V16.62L15.5,15.17L17.5,16.3L18.12,18.63L20,18.12L19.53,16.35L21.3,15.88L20.79,13.95M9.5,10.56L12,9.11L14.5,10.56V13.44L12,14.89L9.5,13.44V10.56Z"/></svg>
<div class="t" style="top:232.20px;font-size:12.4px;left:632.20px;width:300px;text-align:center;">CZW.</div>
<svg class="ic" style="left:757.88px;top:250.89px;width:43.39px;height:43.39px" viewBox="0 0 64 64"><g filter="url(#blur)"><path d="M47.7,35.4c0-4.6-3.7-8.2-8.2-8.2c-1,0-1.9,0.2-2.8,0.5c-0.3-3.4-3.1-6.2-6.6-6.2c-3.7,0-6.7,3-6.7,6.7c0,0.8,0.2,1.6,0.4,2.3c-0.3-0.1-0.7-0.1-1-0.1c-3.7,0-6.7,3-6.7,6.7c0,3.6,2.9,6.6,6.5,6.7l17.2,0C44.2,43.3,47.7,39.8,47.7,35.4z" fill="#57A0EE" stroke="#fff" stroke-width="1.2" stroke-linejoin="round" transform="translate(0,-1)"/><line x1="27.6" y1="46.5" x2="26.6" y2="51" stroke="#91C0F8" stroke-width="2" stroke-linecap="round"/><line x1="33.6" y1="45" x2="33.1" y2="48" stroke="#91C0F8" stroke-width="2" stroke-linecap="round"/></g></svg>
<div class="t" style="top:300.57px;font-size:12.2px;font-weight:700;left:632.20px;width:300px;text-align:center;">19°C</div>
<div class="t" style="top:327.30px;font-size:12.4px;color:#757575;left:632.20px;width:300px;text-align:center;">6°C</div>
<div class="t" style="top:352.50px;font-size:12.4px;left:632.20px;width:300px;text-align:center;">0.6 mm</div>
<div class="vl" style="left:806.8px;top:225px;height:145px"></div>
<div class="t" style="top:232.20px;font-size:12.4px;left:682.40px;width:300px;text-align:center;">PT.</div>
<svg class="ic" style="left:808.08px;top:250.89px;width:43.39px;height:43.39px" viewBox="0 0 64 64"><g filter="url(#blur)"><path d="M47.7,35.4c0-4.6-3.7-8.2-8.2-8.2c-1,0-1.9,0.2-2.8,0.5c-0.3-3.4-3.1-6.2-6.6-6.2c-3.7,0-6.7,3-6.7,6.7c0,0.8,0.2,1.6,0.4,2.3c-0.3-0.1-0.7-0.1-1-0.1c-3.7,0-6.7,3-6.7,6.7c0,3.6,2.9,6.6,6.5,6.7l17.2,0C44.2,43.3,47.7,39.8,47.7,35.4z" fill="#57A0EE" stroke="#fff" stroke-width="1.2" stroke-linejoin="round" transform="translate(0,-1)"/><line x1="27.6" y1="46.5" x2="26.6" y2="51" stroke="#91C0F8" stroke-width="2" stroke-linecap="round"/><line x1="33.6" y1="45" x2="33.1" y2="48" stroke="#91C0F8" stroke-width="2" stroke-linecap="round"/></g></svg>
<div class="t" style="top:300.57px;font-size:12.2px;font-weight:700;left:682.40px;width:300px;text-align:center;">10°C</div>
<div class="t" style="top:327.30px;font-size:12.4px;color:#757575;left:682.40px;width:300px;text-align:center;">4°C</div>
<div class="t" style="top:352.50px;font-size:12.4px;left:682.40px;width:300px;text-align:center;">4 mm</div>
<div class="vl" style="left:857.0px;top:225px;height:145px"></div>
<div class="t" style="top:232.20px;font-size:12.4px;left:732.60px;width:300px;text-align:center;">SOB.</div>
<svg class="ic" style="left:858.28px;top:250.89px;width:43.39px;height:43.39px" viewBox="0 0 64 64"><g filter="url(#blur)"><path d="M47.7,35.4c0-4.6-3.7-8.2-8.2-8.2c-1,0-1.9,0.2-2.8,0.5c-0.3-3.4-3.1-6.2-6.6-6.2c-3.7,0-6.7,3-6.7,6.7c0,0.8,0.2,1.6,0.4,2.3c-0.3-0.1-0.7-0.1-1-0.1c-3.7,0-6.7,3-6.7,6.7c0,3.6,2.9,6.6,6.5,6.7l17.2,0C44.2,43.3,47.7,39.8,47.7,35.4z" fill="#57A0EE" stroke="#fff" stroke-width="1.2" stroke-linejoin="round" transform="translate(0,-1)"/><line x1="27.6" y1="46.5" x2="26.6" y2="51" stroke="#91C0F8" stroke-width="2" stroke-linecap="round"/><line x1="33.6" y1="45" x2="33.1" y2="48" stroke="#91C0F8" stroke-width="2" stroke-linecap="round"/></g></svg>
<div class="t" style="top:300.57px;font-size:12.2px;font-weight:700;left:732.60px;width:300px;text-align:center;">8°C</div>
<div class="t" style="top:327.30px;font-size:12.4px;color:#757575;left:732.60px;width:300px;text-align:center;">2°C</div>
<div class="t" style="top:352.50px;font-size:12.4px;left:732.60px;width:300px;text-align:center;">5.4 mm</div>
<div class="vl" style="left:907.2px;top:225px;height:145px"></div>
<div class="t" style="top:232.20px;font-size:12.4px;left:782.80px;width:300px;text-align:center;">NIEDZ.</div>
<svg class="ic" style="left:908.88px;top:250.89px;width:43.39px;height:43.39px" viewBox="0 0 64 64"><g filter="url(#blur)"><path d="M47.7,35.4c0-4.6-3.7-8.2-8.2-8.2c-1,0-1.9,0.2-2.8,0.5c-0.3-3.4-3.1-6.2-6.6-6.2c-3.7,0-6.7,3-6.7,6.7c0,0.8,0.2,1.6,0.4,2.3c-0.3-0.1-0.7-0.1-1-0.1c-3.7,0-6.7,3-6.7,6.7c0,3.6,2.9,6.6,6.5,6.7l17.2,0C44.2,43.3,47.7,39.8,47.7,35.4z" fill="#91C0F8" stroke="#fff" stroke-width="1.2" stroke-linejoin="round" transform="translate(24,5.3) scale(0.46)"/><path d="M47.7,35.4c0-4.6-3.7-8.2-8.2-8.2c-1,0-1.9,0.2-2.8,0.5c-0.3-3.4-3.1-6.2-6.6-6.2c-3.7,0-6.7,3-6.7,6.7c0,0.8,0.2,1.6,0.4,2.3c-0.3-0.1-0.7-0.1-1-0.1c-3.7,0-6.7,3-6.7,6.7c0,3.6,2.9,6.6,6.5,6.7l17.2,0C44.2,43.3,47.7,39.8,47.7,35.4z" fill="#57A0EE" stroke="#fff" stroke-width="1.2" stroke-linejoin="round" transform="translate(0,-1)"/></g></svg>
<div class="t" style="top:300.57px;font-size:12.2px;font-weight:700;left:782.80px;width:300px;text-align:center;">6°C</div>
<div class="t" style="top:327.30px;font-size:12.4px;color:#757575;left:782.80px;width:300px;text-align:center;">-2°C</div>
<div class="t" style="top:352.50px;font-size:12.4px;left:782.80px;width:300px;text-align:center;">0 mm</div>
<div class="vl" style="left:957.4px;top:225px;height:145px"></div>
<div class="t" style="top:232.20px;font-size:12.4px;left:833.00px;width:300px;text-align:center;">PON.</div>
<svg class="ic" style="left:959.18px;top:253.19px;width:43.39px;height:43.39px" viewBox="0 0 64 64"><g filter="url(#blur)"><g transform="translate(32,28.5) rotate(10)"><line x1="0" y1="9.6" x2="0" y2="12.8" transform="rotate(0)" stroke="#FFB84A" stroke-width="2" stroke-linecap="round"/><line x1="0" y1="9.6" x2="0" y2="12.8" transform="rotate(45)" stroke="#FFB84A" stroke-width="2" stroke-linecap="round"/><line x1="0" y1="9.6" x2="0" y2="12.8" transform="rotate(90)" stroke="#FFB84A" stroke-width="2" stroke-linecap="round"/><line x1="0" y1="9.6" x2="0" y2="12.8" transform="rotate(135)" stroke="#FFB84A" stroke-width="2" stroke-linecap="round"/><line x1="0" y1="9.6" x2="0" y2="12.8" transform="rotate(180)" stroke="#FFB84A" stroke-width="2" stroke-linecap="round"/><line x1="0" y1="9.6" x2="0" y2="12.8" transform="rotate(225)" stroke="#FFB84A" stroke-width="2" stroke-linecap="round"/><line x1="0" y1="9.6" x2="0" y2="12.8" transform="rotate(270)" stroke="#FFB84A" stroke-width="2" stroke-linecap="round"/><line x1="0" y1="9.6" x2="0" y2="12.8" transform="rotate(315)" stroke="#FFB84A" stroke-width="2" stroke-linecap="round"/><circle r="5.4" fill="#FFA00A" stroke="#FFA00A" stroke-width="1.4"/></g></g></svg>
<div class="t" style="top:300.57px;font-size:12.2px;font-weight:700;left:833.00px;width:300px;text-align:center;">12°C</div>
<div class="t" style="top:327.30px;font-size:12.4px;color:#757575;left:833.00px;width:300px;text-align:center;">-1°C</div>
<div class="t" style="top:352.50px;font-size:12.4px;left:833.00px;width:300px;text-align:center;">0 mm</div>
<div class="vl" style="left:1007.6px;top:225px;height:145px"></div>
<div class="t" style="top:232.20px;font-size:12.4px;left:883.20px;width:300px;text-align:center;">WT.</div>
<svg class="ic" style="left:1008.88px;top:250.89px;width:43.39px;height:43.39px" viewBox="0 0 64 64"><g filter="url(#blur)"><path d="M47.7,35.4c0-4.6-3.7-8.2-8.2-8.2c-1,0-1.9,0.2-2.8,0.5c-0.3-3.4-3.1-6.2-6.6-6.2c-3.7,0-6.7,3-6.7,6.7c0,0.8,0.2,1.6,0.4,2.3c-0.3-0.1-0.7-0.1-1-0.1c-3.7,0-6.7,3-6.7,6.7c0,3.6,2.9,6.6,6.5,6.7l17.2,0C44.2,43.3,47.7,39.8,47.7,35.4z" fill="#57A0EE" stroke="#fff" stroke-width="1.2" stroke-linejoin="round" transform="translate(0,-1)"/><line x1="27.6" y1="46.5" x2="26.6" y2="51" stroke="#91C0F8" stroke-width="2" stroke-linecap="round"/><line x1="33.6" y1="45" x2="33.1" y2="48" stroke="#91C0F8" stroke-width="2" stroke-linecap="round"/></g></svg>
<div class="t" style="top:300.57px;font-size:12.2px;font-weight:700;left:883.20px;width:300px;text-align:center;">7°C</div>
<div class="t" style="top:327.30px;font-size:12.4px;color:#757575;left:883.20px;width:300px;text-align:center;">2°C</div>
<div class="t" style="top:352.50px;font-size:12.4px;left:883.20px;width:300px;text-align:center;">2.9 mm</div>
<div class="vl" style="left:1057.8px;top:225px;height:145px"></div>
<div class="t" style="top:232.20px;font-size:12.4px;left:933.40px;width:300px;text-align:center;">ŚR.</div>
<svg class="ic" style="left:1059.08px;top:250.89px;width:43.39px;height:43.39px" viewBox="0 0 64 64"><g filter="url(#blur)"><path d="M47.7,35.4c0-4.6-3.7-8.2-8.2-8.2c-1,0-1.9,0.2-2.8,0.5c-0.3-3.4-3.1-6.2-6.6-6.2c-3.7,0-6.7,3-6.7,6.7c0,0.8,0.2,1.6,0.4,2.3c-0.3-0.1-0.7-0.1-1-0.1c-3.7,0-6.7,3-6.7,6.7c0,3.6,2.9,6.6,6.5,6.7l17.2,0C44.2,43.3,47.7,39.8,47.7,35.4z" fill="#57A0EE" stroke="#fff" stroke-width="1.2" stroke-linejoin="round" transform="translate(0,-1)"/><circle cx="21.6" cy="51.6" r="2" fill="#C4DCFA"/><circle cx="31.1" cy="50" r="2" fill="#57A0EE"/><circle cx="40.8" cy="51.6" r="2" fill="#C4DCFA"/></g></svg>
<div class="t" style="top:300.57px;font-size:12.2px;font-weight:700;left:933.40px;width:300px;text-align:center;">6°C</div>
<div class="t" style="top:327.30px;font-size:12.4px;color:#757575;left:933.40px;width:300px;text-align:center;">1°C</div>
<div class="t" style="top:352.50px;font-size:12.4px;left:933.40px;width:300px;text-align:center;">2.6 mm</div>
<div class="t" style="top:84.30px;font-size:12.4px;left:438.90px;">Sygnatura czasowa Astrow…</div>
<div class="t" style="top:84.30px;font-size:12.4px;right:391.20px;">2021-04-02 00:00:00</div>
<svg class="ic" style="left:396.15px;top:80.19px;width:21.41px;height:21.41px;" viewBox="0 0 24 24"><path fill="#44739e" d="M19,19H5V8H19M16,1V3H8V1H6V3H5C3.89,3 3,3.89 3,5V19A2,2 0 0,0 5,21H19A2,2 0 0,0 21,19V5C21,3.89 20.1,3 19,3H18V1M17,12H12V17H17V12Z"/></svg>
<div class="t" style="top:127.15px;font-size:12.4px;left:438.90px;">Najbliższy zachód Słońca</div>
<div class="t" style="top:127.15px;font-size:12.4px;right:391.20px;">2021-04-02 19:25:04</div>
<svg class="ic" style="left:396.15px;top:122.59px;width:21.41px;height:21.41px;" viewBox="0 0 24 24"><path fill="#44739e" d="M3,12H7A5,5 0 0,1 12,7A5,5 0 0,1 17,12H21A1,1 0 0,1 22,13A1,1 0 0,1 21,14H3A1,1 0 0,1 2,13A1,1 0 0,1 3,12M15,12A3,3 0 0,0 12,9A3,3 0 0,0 9,12H15M12,2L14.39,5.42C13.65,5.15 12.84,5 12,5C11.16,5 10.35,5.15 9.61,5.42L12,2M3.34,7L7.5,6.65C6.9,7.16 6.36,7.78 5.94,8.5C5.5,9.24 5.25,10 5.11,10.79L3.34,7M20.65,7L18.88,10.79C18.74,10 18.47,9.23 18.05,8.5C17.63,7.78 17.1,7.15 16.5,6.64L20.65,7M12.71,20.71L15.82,17.6C16.21,17.21 16.21,16.57 15.82,16.18C15.43,15.79 14.8,15.79 14.41,16.18L12,18.59L9.59,16.18C9.2,15.79 8.57,15.79 8.18,16.18C7.79,16.57 7.79,17.21 8.18,17.6L11.29,20.71C11.5,20.9 11.74,21 12,21C12.26,21 12.5,20.9 12.71,20.71Z"/></svg>
<div class="t" style="top:170.00px;font-size:12.4px;left:438.90px;">Najbliższy wschód Księżyca</div>
<div class="t" style="top:170.00px;font-size:12.4px;right:391.20px;">2021-04-03 00:11:01</div>
<svg class="ic" style="left:396.15px;top:164.10px;width:21.41px;height:21.41px;" viewBox="0 0 24 24"><path fill="#44739e" d="M9.2,8.1H18.6V17.5L15.31,14.21L8.81,20.71L5.99,17.89L12.49,11.39Z"/></svg>
<div class="t" style="top:212.85px;font-size:12.4px;left:438.90px;">Najbliższy zachód Księżyca</div>
<div class="t" style="top:212.85px;font-size:12.4px;right:391.20px;">2021-04-02 06:49:26</div>
<svg class="ic" style="left:396.15px;top:208.74px;width:21.41px;height:21.41px;" viewBox="0 0 24 24"><path fill="#44739e" d="M9.2,17.1H18.6V7.7L15.31,10.99L8.81,4.49L5.99,7.31L12.49,13.81Z"/></svg>
<div class="t" style="top:255.70px;font-size:12.4px;left:438.90px;">Faza Księżyca</div>
<div class="t" style="top:255.70px;font-size:12.4px;right:391.20px;">76,3 %</div>
<svg class="ic" style="left:396.15px;top:250.70px;width:21.41px;height:21.41px;" viewBox="0 0 24 24"><ellipse cx="10.3" cy="12.9" rx="7.7" ry="9.9" fill="#44739e"/></svg>
<svg class="ic" style="left:0;top:0;width:1115px;height:743px" viewBox="0 0 1115 743"><path d="M402.75,389.8 A60.15,60.15 0 0 1 523.05,389.8" fill="none" stroke="#f8f8f8" stroke-width="22.30"/><path d="M402.75,389.8 A60.15,60.15 0 0 1 511.25,354.02" fill="none" stroke="#df4c1e" stroke-width="22.30"/></svg>
<div class="t" style="top:367.84px;font-size:25px;left:312.90px;width:300px;text-align:center;transform:scaleX(0.93);-webkit-text-stroke:0.3px #212121;">4,0</div>
<div class="t" style="top:399.40px;font-size:13.0px;left:312.90px;width:300px;text-align:center;">Dziś w nocy</div>
<svg class="ic" style="left:0;top:0;width:1115px;height:743px" viewBox="0 0 1115 743"><path d="M588.75,389.8 A60.15,60.15 0 0 1 709.05,389.8" fill="none" stroke="#f8f8f8" stroke-width="22.30"/><path d="M588.75,389.8 A60.15,60.15 0 0 1 697.25,354.02" fill="none" stroke="#df4c1e" stroke-width="22.30"/></svg>
<div class="t" style="top:367.84px;font-size:25px;left:498.90px;width:300px;text-align:center;transform:scaleX(0.93);-webkit-text-stroke:0.3px #212121;">4,0</div>
<div class="t" style="top:399.40px;font-size:13.0px;left:498.90px;width:300px;text-align:center;">Jutrzejsza noc</div>
<div class="t" style="top:460.90px;font-size:12.4px;left:438.90px;">Dzisiejsza prognoza Astroweather</div>
<div class="t" style="top:460.90px;font-size:12.4px;right:391.20px;">Poor-Poor-Poor</div>
<svg class="ic" style="left:396.15px;top:457.99px;width:21.41px;height:21.41px;" viewBox="0 0 24 24"><path fill="#44739e" d="M19,19V8H5V19H19M16,1H18V3H19A2,2 0 0,1 21,5V19A2,2 0 0,1 19,21H5A2,2 0 0,1 3,19V5A2,2 0 0,1 5,3H6V1H8V3H16V1M12.00,8.58L13.41,11.91L16.99,12.16L14.30,14.60L15.07,18.18L12.00,16.26L8.93,18.18L9.70,14.60L7.01,12.16L10.59,11.91Z"/></svg>
<div class="t" style="top:503.80px;font-size:12.4px;left:438.90px;">Jutrzejsza prognoza Astroweather</div>
<div class="t" style="top:503.80px;font-size:12.4px;right:391.20px;">Poor-Poor-Poor</div>
<svg class="ic" style="left:396.15px;top:500.89px;width:21.41px;height:21.41px;" viewBox="0 0 24 24"><path fill="#44739e" d="M19,19V8H5V19H19M16,1H18V3H19A2,2 0 0,1 21,5V19A2,2 0 0,1 19,21H5A2,2 0 0,1 3,19V5A2,2 0 0,1 5,3H6V1H8V3H16V1M12.00,8.58L13.41,11.91L16.99,12.16L14.30,14.60L15.07,18.18L12.00,16.26L8.93,18.18L9.70,14.60L7.01,12.16L10.59,11.91Z"/></svg>
<div class="t" style="top:576.10px;font-size:12.4px;left:438.90px;">Astroweather Deep Sky View</div>
<div class="t" style="top:576.10px;font-size:12.4px;right:391.20px;">wył.</div>
<svg class="ic" style="left:396.15px;top:571.40px;width:21.41px;height:21.41px;" viewBox="0 0 24 24"><path fill="#44739e" d="M12,20A8,8 0 0,1 4,12A8,8 0 0,1 12,4A8,8 0 0,1 20,12A8,8 0 0,1 12,20M12,2A10,10 0 0,0 2,12A10,10 0 0,0 12,22A10,10 0 0,0 22,12A10,10 0 0,0 12,2Z"/></svg>
<div class="t" style="top:618.95px;font-size:12.4px;left:438.90px;">Astroweather View Condition Plain</div>
<div class="t" style="top:618.95px;font-size:12.4px;right:391.20px;">Poor</div>
<svg class="ic" style="left:396.15px;top:614.25px;width:21.41px;height:21.41px;" viewBox="0 0 24 24"><g transform="translate(0,0.8)"><path fill="none" stroke="#44739e" stroke-width="2" stroke-linecap="round" d="M4.2,15.4C2.9,14.6 2.2,13.2 2.2,11.8C2.2,9.4 4.2,7.5 6.8,7.5C7.8,5.1 9.9,3.6 12.4,3.6C15.4,3.6 17.8,5.8 18.1,8.6C20.4,8.7 22,10.5 22,12.6C22,14.2 21,15.5 19.6,16.1"/><path fill="none" stroke="#44739e" stroke-width="2.1" stroke-linecap="butt" transform="rotate(12 9.1 17.2)" d="M9.1,12.6V21.8M5.1,14.9L13.1,19.5M5.1,19.5L13.1,14.9"/><path fill="#44739e" d="M16.3,15.0C16.3,15.0 14.1,17.9 14.1,19.5C14.1,20.8 15.1,21.8 16.3,21.8C17.5,21.8 18.5,20.8 18.5,19.5C18.5,17.9 16.3,15.0 16.3,15.0Z"/></g></svg>
<div class="t" style="top:661.80px;font-size:12.4px;left:438.90px;">Astroweather Transparency Plain</div>
<div class="t" style="top:661.80px;font-size:12.4px;right:391.20px;">&gt;1 mag</div>
<svg class="ic" style="left:396.15px;top:657.10px;width:21.41px;height:21.41px;" viewBox="0 0 24 24"><path fill="none" stroke="#44739e" stroke-width="2.1" stroke-linejoin="round" d="M5.8,9.4H18.2C20.4,9.4 21.7,10.8 21.7,12.8C21.7,15.9 20.3,18.2 17.8,18.2C15.6,18.2 14.8,15.9 12,15.9C9.2,15.9 8.4,18.2 6.2,18.2C3.7,18.2 2.3,15.9 2.3,12.8C2.3,10.8 3.6,9.4 5.8,9.4Z"/><path fill="none" stroke="#44739e" stroke-width="1.6" d="M1.2,11.6V14.2M22.8,11.6V14.2"/></svg>
<div class="t" style="top:704.65px;font-size:12.4px;left:438.90px;">Astroweather Clouds Plain</div>
<div class="t" style="top:704.65px;font-size:12.4px;right:391.20px;">94-100 %</div>
<svg class="ic" style="left:396.15px;top:699.95px;width:21.41px;height:21.41px;" viewBox="0 0 24 24"><g fill="none" stroke="#44739e" stroke-width="2" stroke-linejoin="round" stroke-linecap="round"><path d="M10.6,2.6C8.6,5.8 9.4,10.8 13.6,12.8C16.2,14 19.6,13.8 22,12.6C18.6,12.2 15.2,10.4 13.2,7.6C11.9,5.8 11,4.2 10.6,2.6Z"/><path d="M6.2,21.8H18.4A2.5,2.5 0 0 0 18.4,16.8H16.6C16,14.6 14.1,13.2 11.8,13.2C9.4,13.2 7.6,14.8 7.2,16.8H6.2A2.5,2.5 0 0 0 6.2,21.8Z"/></g></svg>
<div class="t" style="top:419.90px;font-size:12.4px;left:809.50px;">Gismeteo Cloud coverage</div>
<div class="t" style="top:419.90px;font-size:12.4px;right:20.90px;">99 %</div>
<svg class="ic" style="left:766.25px;top:415.90px;width:21.41px;height:21.41px;" viewBox="0 0 24 24"><g fill="none" stroke="#44739e" stroke-width="1.8" stroke-linecap="round" stroke-linejoin="round"><path d="M10.3,16.7A4.5,4.5 0 1 1 16.9,11.9"/><path d="M4.6,22.1H18.4C20.2,22.1 21.3,21 21.3,19.6C21.3,18.2 20.1,17 18.6,17H17.2C16.9,14.2 15,12.3 12.4,12.3C10,12.3 8.3,14 7.8,16.2C5.6,16.2 3.8,17.6 3.8,19.5C3.8,20.7 4,21.6 4.6,22.1Z"/></g><path fill="#44739e" d="M5.2,5.1L8.3,6.1L5.5,7.9Z M12.9,4.3L15.9,5.6L13.3,6.6Z M19.1,9.6L17.4,12.3L17.3,9.2Z M2,11.9L3.9,9.7L4,12.7Z"/></svg>
<div class="t" style="top:462.90px;font-size:12.4px;left:809.50px;">Gismeteo Condition</div>
<div class="t" style="top:462.90px;font-size:12.4px;right:20.90px;">rainy</div>
<svg class="ic" style="left:766.25px;top:458.90px;width:21.41px;height:21.41px;" viewBox="0 0 24 24"><path fill="#44739e" d="M12,9A3,3 0 0,0 9,12A3,3 0 0,0 12,15A3,3 0 0,0 15,12A3,3 0 0,0 12,9M12,17A5,5 0 0,1 7,12A5,5 0 0,1 12,7A5,5 0 0,1 17,12A5,5 0 0,1 12,17M12,4.5C7,4.5 2.73,7.61 1,12C2.73,16.39 7,19.5 12,19.5C17,19.5 21.27,16.39 23,12C21.27,7.61 17,4.5 12,4.5Z"/></svg>
<div class="t" style="top:505.90px;font-size:12.4px;left:809.50px;">Gismeteo Geomagnetic field</div>
<div class="t" style="top:505.90px;font-size:12.4px;right:20.90px;">2</div>
<svg class="ic" style="left:766.25px;top:501.90px;width:21.41px;height:21.41px;" viewBox="0 0 24 24"><path fill="#44739e" d="M2.6,6.9H6.6V13A5.05,5.05 0 0 0 16.7,13V6.9H20.7V13A9.05,9.05 0 0 1 2.6,13Z M2.6,2H6.6V5.2H2.6Z M16.7,2H20.7V5.2H16.7Z M12.9,1.8L9.1,9.6H11.7L10.9,13.6L14.6,6.6H12.1Z"/></svg>
<div class="t" style="top:548.90px;font-size:12.4px;left:809.50px;">Gismeteo Humidity</div>
<div class="t" style="top:548.90px;font-size:12.4px;right:20.90px;">84 %</div>
<svg class="ic" style="left:766.25px;top:545.25px;width:21.41px;height:21.41px;" viewBox="0 0 24 24"><path fill="#44739e" d="M12,3.25C12,3.25 6,10 6,14C6,17.32 8.69,20 12,20A6,6 0 0,0 18,14C18,10 12,3.25 12,3.25M14.47,9.97L15.53,11.03L9.53,17.03L8.47,15.97M9.75,10A1.25,1.25 0 0,1 11,11.25A1.25,1.25 0 0,1 9.75,12.5A1.25,1.25 0 0,1 8.5,11.25A1.25,1.25 0 0,1 9.75,10M14.25,14.5A1.25,1.25 0 0,1 15.5,15.75A1.25,1.25 0 0,1 14.25,17A1.25,1.25 0 0,1 13,15.75A1.25,1.25 0 0,1 14.25,14.5Z"/></svg>
<div class="t" style="top:591.90px;font-size:12.4px;left:809.50px;">Gismeteo Pressure</div>
<div class="t" style="top:591.90px;font-size:12.4px;right:20.90px;">999,9 hPa</div>
<svg class="ic" style="left:766.25px;top:587.90px;width:21.41px;height:21.41px;" viewBox="0 0 24 24"><path fill="#44739e" d="M12,2A10,10 0 0,0 2,12A10,10 0 0,0 12,22A10,10 0 0,0 22,12A10,10 0 0,0 12,2M12,4A8,8 0 0,1 20,12C20,14.4 19,16.5 17.3,18C15.9,16.7 14,16 12,16C10,16 8.2,16.7 6.7,18C5,16.5 4,14.4 4,12A8,8 0 0,1 12,4M14,5.89C13.62,5.9 13.26,6.15 13.1,6.54L11.58,10C10.6,10.18 9.84,11 9.73,12C9.6,13.09 10.38,14.08 11.5,14.22C12.6,14.35 13.6,13.56 13.72,12.46C13.79,11.83 13.57,11.21 13.1,10.78L14.72,7.35C14.93,6.85 14.7,6.28 14.21,6.07C14.15,6.03 14.08,6 14,5.89M10,6A1,1 0 0,0 9,7A1,1 0 0,0 10,8A1,1 0 0,0 11,7A1,1 0 0,0 10,6M7,9A1,1 0 0,0 6,10A1,1 0 0,0 7,11A1,1 0 0,0 8,10A1,1 0 0,0 7,9M17,9A1,1 0 0,0 16,10A1,1 0 0,0 17,11A1,1 0 0,0 18,10A1,1 0 0,0 17,9Z"/></svg>
<div class="t" style="top:634.90px;font-size:12.4px;left:809.50px;">Gismeteo Rain</div>
<div class="t" style="top:634.90px;font-size:12.4px;right:20.90px;">6 mm</div>
<svg class="ic" style="left:766.25px;top:630.90px;width:21.41px;height:21.41px;" viewBox="0 0 24 24"><path fill="none" stroke="#44739e" stroke-width="2" stroke-linecap="round" d="M4.6,15.6C3.1,14.9 2,13.4 2,11.7C2,9.3 4,7.3 6.5,7.3C6.7,7.3 6.9,7.3 7.1,7.3C8.1,5.1 10.1,3.9 12.3,3.9C15.4,3.9 17.8,6.2 18,9.1C20.3,9.1 22.1,10.9 22.1,13C22.1,14.6 21.1,16 19.6,16.5"/><path fill="none" stroke="#44739e" stroke-width="1.9" d="M11.1,12.2C11.1,12.2 8.6,15.6 8.6,17.6C8.6,19.4 9.7,20.8 11.1,20.8C12.5,20.8 13.6,19.4 13.6,17.6C13.6,15.6 11.1,12.2 11.1,12.2Z"/></svg>
<div class="t" style="top:677.90px;font-size:12.4px;left:809.50px;">Gismeteo Snow</div>
<div class="t" style="top:677.90px;font-size:12.4px;right:20.90px;">not snowing</div>
<svg class="ic" style="left:766.25px;top:673.90px;width:21.41px;height:21.41px;" viewBox="0 0 24 24"><path fill="none" stroke="#44739e" stroke-width="2" stroke-linecap="round" d="M4.6,15.6C3.1,14.9 2,13.4 2,11.7C2,9.3 4,7.3 6.5,7.3C6.7,7.3 6.9,7.3 7.1,7.3C8.1,5.1 10.1,3.9 12.3,3.9C15.4,3.9 17.8,6.2 18,9.1C20.3,9.1 22.1,10.9 22.1,13C22.1,14.6 21.1,16 19.6,16.5"/><path fill="none" stroke="#44739e" stroke-width="2" d="M11.8,13.7V23.7M7.5,16.2L16.1,21.2M7.5,21.2L16.1,16.2"/></svg>
<div class="t" style="top:720.90px;font-size:12.4px;left:809.50px;">Gismeteo Storm</div>
<div class="t" style="top:720.90px;font-size:12.4px;right:20.90px;">False</div>
<svg class="ic" style="left:766.25px;top:716.90px;width:21.41px;height:21.41px;" viewBox="0 0 24 24"><path fill="none" stroke="#44739e" stroke-width="2" stroke-linecap="round" d="M4.6,15.6C3.1,14.9 2,13.4 2,11.7C2,9.3 4,7.3 6.5,7.3C6.7,7.3 6.9,7.3 7.1,7.3C8.1,5.1 10.1,3.9 12.3,3.9C15.4,3.9 17.8,6.2 18,9.1C20.3,9.1 22.1,10.9 22.1,13C22.1,14.6 21.1,16 19.6,16.5"/><path fill="#44739e" d="M13.4,10.9L9.4,16.8H12.1L10.6,21.6L15.1,15.2H12.5L14.2,10.9Z"/></svg>
</body></html>
